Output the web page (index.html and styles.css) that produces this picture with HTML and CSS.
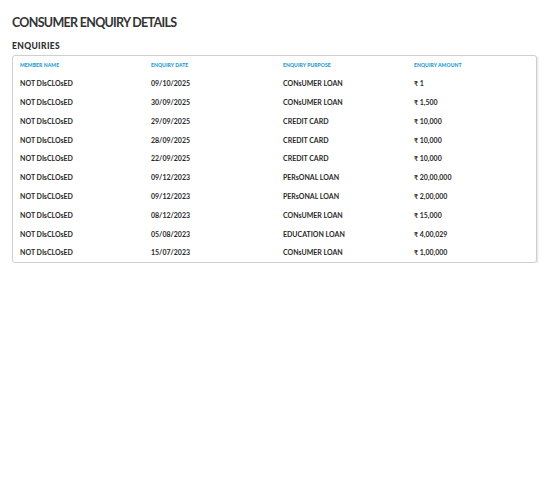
FILE: index.html
```html
<!DOCTYPE html>
<html>
<head>
<meta charset="utf-8">
<link rel="stylesheet" href="styles.css">
</head>
<body>
<div class="page">
  <h1 class="title">CONSUMER ENQUIRY DETAILS</h1>
  <h2 class="subtitle">ENQUIRIES</h2>
  <div class="card">
    <div class="grid">
      <div class="th">MEMBER NAME</div><div class="th">ENQUIRY DATE</div><div class="th">ENQUIRY PURPOSE</div><div class="th">ENQUIRY AMOUNT</div>
      <div class="td">NOT DIsCLOsED</div><div class="td">09/10/2025</div><div class="td">CONsUMER LOAN</div><div class="td">₹ 1</div>
      <div class="td">NOT DIsCLOsED</div><div class="td">30/09/2025</div><div class="td">CONsUMER LOAN</div><div class="td">₹ 1,500</div>
      <div class="td">NOT DIsCLOsED</div><div class="td">29/09/2025</div><div class="td">CREDIT CARD</div><div class="td">₹ 10,000</div>
      <div class="td">NOT DIsCLOsED</div><div class="td">28/09/2025</div><div class="td">CREDIT CARD</div><div class="td">₹ 10,000</div>
      <div class="td">NOT DIsCLOsED</div><div class="td">22/09/2025</div><div class="td">CREDIT CARD</div><div class="td">₹ 10,000</div>
      <div class="td">NOT DIsCLOsED</div><div class="td">09/12/2023</div><div class="td">PERsONAL LOAN</div><div class="td">₹ 20,00,000</div>
      <div class="td">NOT DIsCLOsED</div><div class="td">09/12/2023</div><div class="td">PERsONAL LOAN</div><div class="td">₹ 2,00,000</div>
      <div class="td">NOT DIsCLOsED</div><div class="td">08/12/2023</div><div class="td">CONsUMER LOAN</div><div class="td">₹ 15,000</div>
      <div class="td">NOT DIsCLOsED</div><div class="td">05/08/2023</div><div class="td">EDUCATION LOAN</div><div class="td">₹ 4,00,029</div>
      <div class="td">NOT DIsCLOsED</div><div class="td">15/07/2023</div><div class="td">CONsUMER LOAN</div><div class="td">₹ 1,00,000</div>
    </div>
  </div>
</div>
</body>
</html>
```

FILE: styles.css
```css
html, body {
  margin: 0;
  padding: 0;
  background: #ffffff;
}
.page {
  padding: 16px 12px 0 12px;
  font-family: Lato, "Liberation Sans", sans-serif;
  color: #2b2b2b;
}
.title {
  margin: 0;
  font-size: 12.5px;
  line-height: 14px;
  font-weight: 700;
  color: #333333;
  letter-spacing: -0.7px;
}
.subtitle {
  margin: 9.5px 0 0 0;
  font-size: 8.5px;
  line-height: 12px;
  font-weight: 900;
  color: #2e2e2e;
  letter-spacing: 0.35px;
}
.card {
  margin-top: 3.5px;
  width: 525px;
  box-sizing: border-box;
  border: 1px solid #cfcfcf;
  border-radius: 3px;
  box-shadow: 1px 1px 2px rgba(0,0,0,0.12);
  padding: 0 7px 0.5px 7px;
}
.grid {
  display: grid;
  grid-template-columns: 131px 132px 131px 1fr;
  grid-template-rows: 18px;
  grid-auto-rows: 18.78px;
  align-items: center;
}
.th {
  font-size: 5px;
  font-weight: 900;
  color: #1a9ad0;
  line-height: 8px;
  letter-spacing: 0.1px;
}
.td {
  font-size: 7px;
  font-weight: 700;
  color: #2a2a2a;
  line-height: 10px;
  white-space: nowrap;
}
```
